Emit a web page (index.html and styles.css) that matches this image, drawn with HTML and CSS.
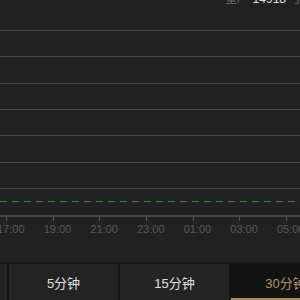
FILE: index.html
```html
<!DOCTYPE html>
<html lang="zh-CN">
<head>
  <meta charset="UTF-8">
  <meta name="viewport" content="width=device-width, initial-scale=1.0">
  <title>分时图</title>
  <link rel="stylesheet" href="styles.css">
</head>
<body>

  <div class="chart">
    <div class="chart-head">
      <span class="head-label">量/</span>
      <span class="head-value">14918</span>
      <span class="head-unit">手</span>
    </div>

    <div class="grid-lines">
      <div class="grid-line"></div>
      <div class="grid-line"></div>
      <div class="grid-line"></div>
      <div class="grid-line"></div>
      <div class="grid-line"></div>
      <div class="grid-line"></div>
      <div class="grid-line"></div>
    </div>

    <div class="dash-line"></div>

    <div class="axis">
      <div class="tick"><span class="tick-label">17:00</span></div>
      <div class="tick"><span class="tick-label">19:00</span></div>
      <div class="tick"><span class="tick-label">21:00</span></div>
      <div class="tick"><span class="tick-label">23:00</span></div>
      <div class="tick"><span class="tick-label">01:00</span></div>
      <div class="tick"><span class="tick-label">03:00</span></div>
      <div class="tick"><span class="tick-label">05:00</span></div>
    </div>
  </div>

  <div class="tabs">
    <div class="tab">1分钟</div>
    <div class="tab">5分钟</div>
    <div class="tab">15分钟</div>
    <div class="tab active">30分钟</div>
  </div>

</body>
</html>
```

FILE: styles.css
```css
body { margin: 0; background: #212121; font-family: "Liberation Sans", "Noto Sans CJK SC", sans-serif; overflow: hidden; width: 300px; height: 300px; }

.chart { height: 262px; overflow: hidden; }
.chart-head { height: 30px; display: flex; justify-content: flex-end; align-items: flex-start; gap: 6px; font-size: 12px; line-height: 12px; overflow: hidden; }
.chart-head span { margin-top: -7px; }
.head-label { color: #6a6a6a; margin-right: 6px; }
.head-value { color: #e0e0e0; }
.head-unit { color: #6a6a6a; margin-right: -4px; }

.grid-lines { display: flex; flex-direction: column; gap: 25.33px; }
.grid-line { height: 1px; background: #4b4b4b; }

.dash-line { margin-top: 12px; height: 1px; background: repeating-linear-gradient(to right, #2e8a2e 0 7px, transparent 7px 12px); }

.axis { margin-top: 13px; border-top: 2px solid #464646; display: flex; padding-left: 6px; }
.tick { flex: 0 0 46.67px; height: 4px; border-left: 1px solid #555; box-sizing: border-box; }
.tick-label { display: block; margin: 6px 0 0 -10px; font-size: 11px; line-height: 12px; color: #595959; white-space: nowrap; }

.tabs { display: flex; gap: 2px; border-top: 2px solid #141414; background: #141414; height: 36px; margin-left: -102px; }
.tab { flex: 0 0 109px; background: #232323; color: #e0e0e0; font-size: 13px; display: flex; align-items: center; justify-content: center; box-sizing: border-box; }
.tab.active { background: #131313; color: #b0936a; border-bottom: 2px solid #a88c64; padding-top: 2px; }
```
